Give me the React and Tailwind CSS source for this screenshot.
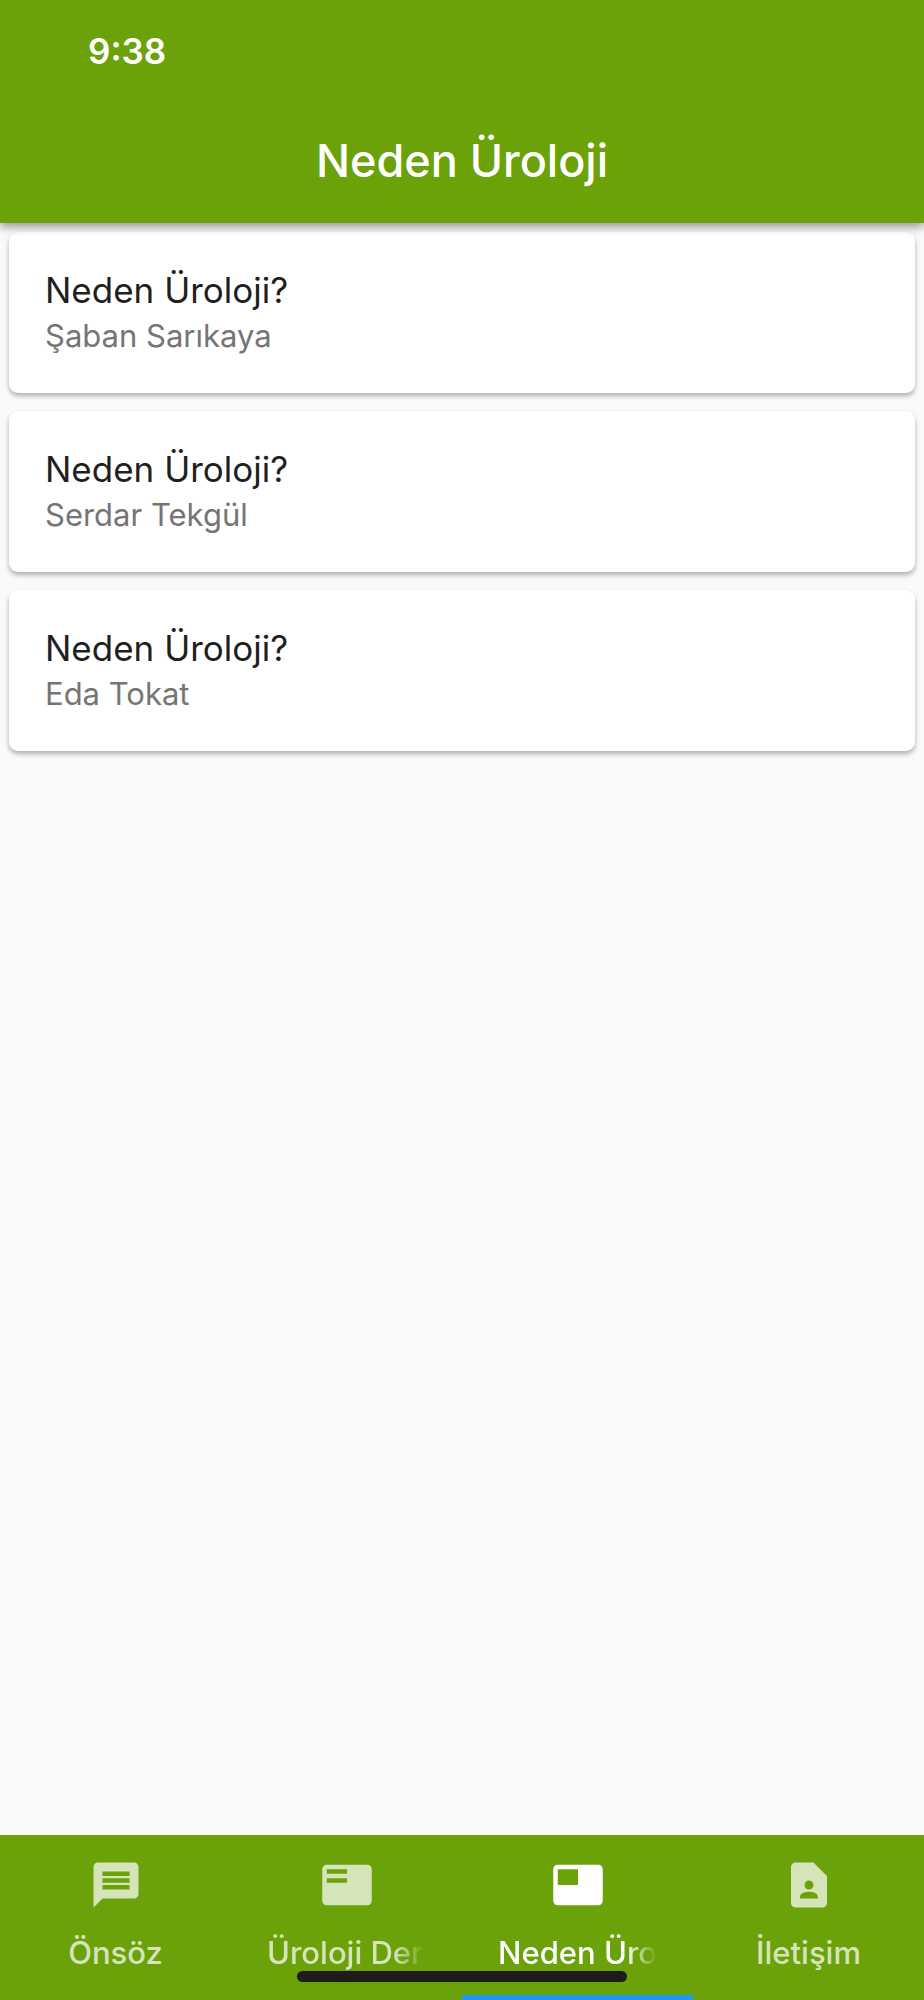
import { useState } from "react";
import { MdContactPage, MdFeaturedPlayList, MdFeaturedVideo, MdMessage } from "react-icons/md";

const articles = [
    { title: "Neden Üroloji?", author: "Şaban Sarıkaya" },
    { title: "Neden Üroloji?", author: "Serdar Tekgül" },
    { title: "Neden Üroloji?", author: "Eda Tokat" },
];

const tabs = [
    { label: "Önsöz", icon: MdMessage },
    { label: "Üroloji Dernekleri", icon: MdFeaturedPlayList, fade: true },
    { label: "Neden Üroloji", icon: MdFeaturedVideo, fade: true },
    { label: "İletişim", icon: MdContactPage },
];

const Header = () => (
    <header className="relative z-10 bg-[#6ba20a] text-white shadow-[0_4px_9px_rgba(0,0,0,0.4)]">
        <div className="h-[100px] pl-[88px] pt-[28px] text-[35px] leading-[46px] font-semibold">9:38</div>
        <h1 className="h-[123px] pt-[33px] text-center text-[45px] leading-[56px] font-medium">Neden Üroloji</h1>
    </header>
);

const ArticleCard = ({ title, author }) => (
    <li className="rounded-[9px] bg-white px-9 py-[35px] shadow-[0_3px_5px_rgba(0,0,0,0.3)]">
        <h2 className="text-[35px] leading-[46px] text-[#1f1f1f]">{title}</h2>
        <p className="text-[31px] leading-[45px] text-[#757575]">{author}</p>
    </li>
);

const TabBar = ({ active, onSelect }) => (
    <nav className="relative bg-[#6ba20a]">
        <div className="grid grid-cols-4">
            {tabs.map(({ label, icon: Icon, fade }, index) => (
                <button
                    key={label}
                    type="button"
                    aria-current={index === active ? "page" : undefined}
                    onClick={() => onSelect(index)}
                    className={`flex h-[165px] min-w-0 flex-col items-center border-b-[5px] px-9 pt-[23px] ${
                        index === active ? "border-[#2196f3] text-white" : "border-transparent text-[#d5e4b9]"
                    }`}
                >
                    <Icon className="size-[54px] shrink-0" />
                    <span
                        className={`mt-5 max-w-full overflow-hidden text-[31px] leading-[42px] font-medium whitespace-nowrap ${
                            fade ? "[mask-image:linear-gradient(to_right,black_80%,transparent)]" : ""
                        }`}
                    >
                        {label}
                    </span>
                </button>
            ))}
        </div>
        {/* Home indicator */}
        <div className="pointer-events-none absolute inset-x-0 bottom-[18px] mx-auto h-[11px] w-[330px] rounded-full bg-[#1c1c1c]" />
    </nav>
);

const App = () => {
    const [active, setActive] = useState(2);

    return (
        <div className="flex min-h-screen flex-col bg-[#fafafa] font-[Inter,sans-serif]">
            <Header />
            <main className="flex-1">
                <ul className="flex flex-col gap-[18px] p-[9px]">
                    {articles.map((article) => (
                        <ArticleCard key={article.author} {...article} />
                    ))}
                </ul>
            </main>
            <TabBar active={active} onSelect={setActive} />
        </div>
    );
};

export default App;
